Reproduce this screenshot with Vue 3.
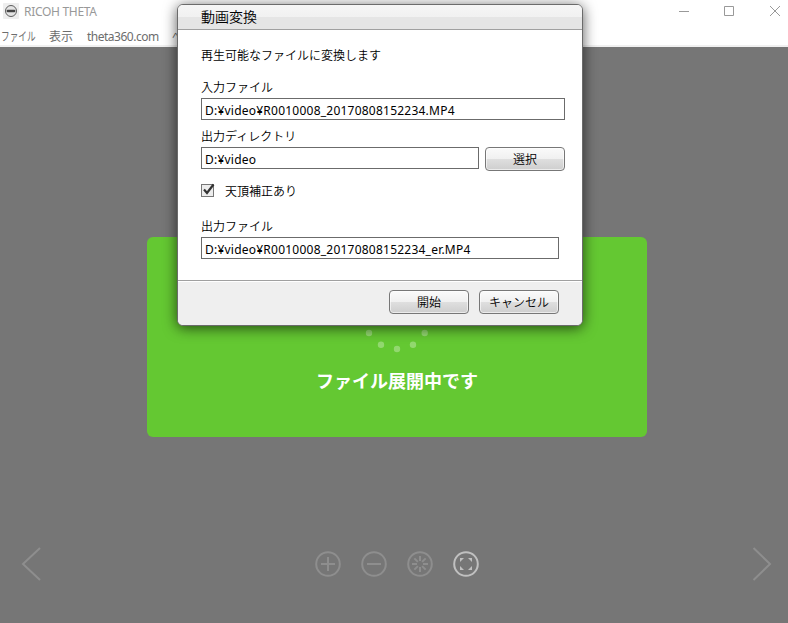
<script setup>
import { ref } from 'vue';

const menus = [
  { label: 'ファイル', type: 'kana' },
  { label: '表示', type: 'kanji' },
  { label: 'theta360.com', type: 'latin' },
  { label: 'ヘルプ', type: 'kana' },
];

const inputFile = ref('D:¥video¥R0010008_20170808152234.MP4');
const outputDir = ref('D:¥video');
const outputFile = ref('D:¥video¥R0010008_20170808152234_er.MP4');
const correction = ref(true);

const dots = [
  { x: 369, y: 333 },
  { x: 381, y: 344.7 },
  { x: 397, y: 349 },
  { x: 413, y: 344.7 },
  { x: 424.7, y: 333 },
];
const rays = [0, 45, 90, 135, 180, 225, 270, 315];
</script>

<template>
  <div class="window">
    <header class="titlebar">
      <svg class="logo" width="16" height="16" viewBox="0 0 16 16">
        <rect width="16" height="16" rx="1" fill="#eeeeee" />
        <circle cx="8" cy="8" r="5.5" fill="#e4e4e4" stroke="#5e5e5e" stroke-width="1" />
        <rect x="3.6" y="6.8" width="8.8" height="2.4" rx="1.2" fill="#444" />
      </svg>
      <span class="appName">RICOH THETA</span>
      <svg class="controls" width="112" height="22" viewBox="0 0 112 22" fill="none" stroke="#999">
        <path d="M3 11.5h10M48.5 6.5h9v9h-9zM94 6l10 10M104 6L94 16" />
      </svg>
    </header>
    <nav class="menubar">
      <span v-for="menu in menus" :key="menu.label" class="menu" :class="menu.type">{{ menu.label }}</span>
    </nav>

    <main class="stage">
      <section class="loading">
        <svg class="spinner" width="80" height="30" viewBox="357 327 80 30">
          <circle v-for="dot in dots" :key="dot.x" :cx="dot.x" :cy="dot.y" r="3.2" fill="#fff" fill-opacity=".3" />
        </svg>
        <p class="loadingText">ファイル展開中です</p>
      </section>
      <div class="viewer">
        <svg width="22" height="36" viewBox="0 0 22 36" fill="none" stroke="#8e8e8e" stroke-width="2">
          <path d="M19 2L2 18L19 34" />
        </svg>
        <div class="tools">
          <svg class="tool" viewBox="0 0 28 28">
            <circle cx="14" cy="14" r="11.8" />
            <path d="M7 14h14M14 7v14" />
          </svg>
          <svg class="tool" viewBox="0 0 28 28">
            <circle cx="14" cy="14" r="11.8" />
            <path d="M7 14h14" />
          </svg>
          <svg class="tool" viewBox="0 0 28 28">
            <circle cx="14" cy="14" r="11.8" />
            <path v-for="angle in rays" :key="angle" d="M14 6v5" :transform="`rotate(${angle} 14 14)`" />
          </svg>
          <svg class="tool active" viewBox="0 0 28 28">
            <circle cx="14" cy="14" r="11.8" />
            <path class="corner" d="M8 8h4l-4 4zM20 8h-4l4 4zM8 20h4l-4-4zM20 20h-4l4-4z" />
          </svg>
        </div>
        <svg width="22" height="36" viewBox="0 0 22 36" fill="none" stroke="#8e8e8e" stroke-width="2">
          <path d="M2.5 2L19 18L2.5 34" />
        </svg>
      </div>
    </main>

    <section class="dialog">
      <h1 class="dialogTitle">動画変換</h1>
      <div class="dialogBody">
        <p class="lead">再生可能なファイルに変換します</p>
        <label class="label">入力ファイル</label>
        <div class="field">{{ inputFile }}</div>
        <label class="label second">出力ディレクトリ</label>
        <div class="row">
          <div class="field">{{ outputDir }}</div>
          <button class="button">選択</button>
        </div>
        <div class="check" @click="correction = !correction">
          <svg width="15" height="15" viewBox="0 0 15 15">
            <rect x=".5" y="1.5" width="12" height="12" fill="#ededed" stroke="#777" />
            <path v-if="correction" d="M3 6.5L6 10L12.5 1.5" fill="none" stroke="#333" stroke-width="2.2" />
          </svg>
          <span>天頂補正あり</span>
        </div>
        <label class="label">出力ファイル</label>
        <div class="field short">{{ outputFile }}</div>
      </div>
      <footer class="dialogFooter">
        <button class="button">開始</button>
        <button class="button">キャンセル</button>
      </footer>
    </section>
  </div>
</template>

<style>
body {
  margin: 0;
  overflow: hidden;
}
</style>

<style scoped>
.window {
  position: relative;
  width: 788px;
  height: 623px;
  overflow: hidden;
  display: flex;
  flex-direction: column;
  background: #fff;
  font-family: "Noto Sans", "Noto Sans CJK JP", sans-serif;
  font-size: 12px;
  color: #000;
}

.titlebar {
  height: 26px;
  display: flex;
  align-items: flex-start;
  padding-left: 3px;
}

.logo {
  margin-top: 3px;
}

.appName {
  margin-left: 5px;
  line-height: 23px;
  color: #999;
  letter-spacing: -0.3px;
}

.controls {
  margin-left: auto;
}

.menubar {
  height: 19px;
  display: flex;
  padding-left: 1px;
  border-bottom: 2px solid #f0f0f0;
  line-height: 21px;
  color: #6d6d6d;
}

.menu {
  white-space: nowrap;
  flex-shrink: 0;
}

.kana {
  width: 48px;
  transform: scaleX(0.72);
  transform-origin: left;
}

.kanji {
  width: 38px;
}

.latin {
  width: 85px;
  letter-spacing: -0.5px;
}

.stage {
  flex: 1;
  display: grid;
  grid-template-rows: 200px 1fr;
  padding-top: 190px;
  background: #767676;
}

.loading {
  width: 500px;
  justify-self: center;
  box-sizing: border-box;
  padding-top: 90px;
  margin-left: 6px;
  border-radius: 6px;
  background: #64c832;
  text-align: center;
}

.spinner {
  display: block;
  margin: 0 auto;
}

.loadingText {
  margin: 10px 0 0;
  font: bold 18px/26px "Noto Sans CJK JP", sans-serif;
  color: #fff;
}

.viewer {
  display: flex;
  align-items: center;
  justify-content: space-between;
  height: 36px;
  margin-top: 109px;
  padding: 0 15px 0 21px;
}

.tools {
  display: flex;
  gap: 18px;
}

.tool {
  width: 28px;
  height: 28px;
  fill: none;
  stroke: #8e8e8e;
  stroke-width: 2;
}

.active {
  stroke: #c0c0c0;
}

.corner {
  fill: #c0c0c0;
  stroke: none;
}

.dialog {
  position: absolute;
  left: 177px;
  top: 4px;
  width: 406px;
  height: 322px;
  box-sizing: border-box;
  display: flex;
  flex-direction: column;
  border: 1px solid #6b6b6b;
  border-radius: 6px;
  overflow: hidden;
  background: #fff;
  box-shadow: 0 2px 14px rgba(0, 0, 0, 0.65);
  font-weight: 350;
}

.dialogTitle {
  margin: 0;
  padding-left: 23px;
  height: 24px;
  border-bottom: 1px solid #a0a0a0;
  background: linear-gradient(#f5f5f5, #f1f1f1 50%, #e5e5e5 50%);
  font-size: 14px;
  font-weight: 350;
  line-height: 24px;
}

.dialogBody {
  height: 250px;
  box-sizing: border-box;
  padding: 17px 17px 0 23px;
}

.lead {
  margin: 0 0 14px;
  line-height: 18px;
}

.label {
  display: block;
  line-height: 18px;
  margin-bottom: 1px;
}

.second {
  margin-top: 8px;
}

.field {
  flex: 1;
  height: 22px;
  box-sizing: border-box;
  padding-left: 3px;
  border: 1px solid #6b6b6b;
  font-weight: 400;
  line-height: 23px;
  letter-spacing: 0.23px;
  white-space: nowrap;
}

.short {
  margin-right: 6px;
}

.row {
  display: flex;
  gap: 6px;
}

.button {
  width: 80px;
  height: 24px;
  padding: 0;
  border: 1px solid #777;
  border-radius: 4px;
  background: linear-gradient(#fafafa, #f0f0f0 50%, #dfdfdf 50%, #cecece);
  box-shadow: inset 0 0 0 1px rgba(255, 255, 255, 0.6);
  font: 350 12px/20px "Noto Sans CJK JP", sans-serif;
  color: #000;
}

.check {
  display: flex;
  gap: 9px;
  height: 18px;
  margin: 12px 0 17px;
  line-height: 18px;
}

.dialogFooter {
  flex: 1;
  display: flex;
  justify-content: flex-end;
  gap: 10px;
  padding: 9px 23px 0 0;
  border-top: 1px solid #a0a0a0;
  box-shadow: inset 0 1px #fff;
  background: #efefef;
}
</style>
